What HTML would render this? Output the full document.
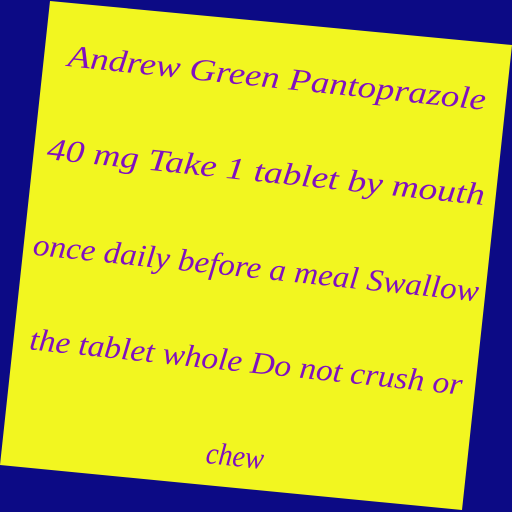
<!DOCTYPE html>
<html><head><style>html,body{margin:0;padding:0;background:#0c0a85;width:512px;height:512px;overflow:hidden}</style></head>
<body>
<svg width="512" height="512" viewBox="0 0 512 512" xmlns="http://www.w3.org/2000/svg">
<rect width="512" height="512" fill="#0c0a85"/>
<polygon points="50,1 512,45 462,510 0,465" fill="#f2f620"/>
<g font-family="Liberation Serif, serif" font-style="italic" font-size="31" fill="#8010c0" text-anchor="middle">
<text transform="translate(276,88) rotate(6)" textLength="420" lengthAdjust="spacingAndGlyphs">Andrew Green Pantoprazole</text>
<text transform="translate(265,182) rotate(6)" textLength="440" lengthAdjust="spacingAndGlyphs">40 mg Take 1 tablet by mouth</text>
<text transform="translate(255,278) rotate(6)" textLength="448" lengthAdjust="spacingAndGlyphs">once daily before a meal Swallow</text>
<text transform="translate(245,372) rotate(6)" textLength="435" lengthAdjust="spacingAndGlyphs">the tablet whole Do not crush or</text>
<text transform="translate(234,466) rotate(6)" textLength="58" lengthAdjust="spacingAndGlyphs">chew</text>
</g>
</svg>
</body></html>
